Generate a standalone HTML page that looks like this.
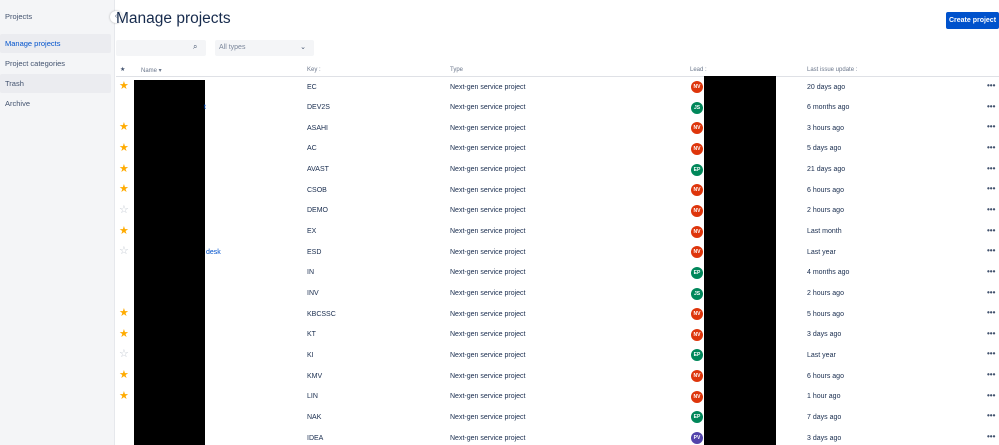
<!DOCTYPE html>
<html><head><style>
body{margin:0;width:999px;height:445px;overflow:hidden;background:#fff;font-family:"Liberation Sans",sans-serif;color:#172b4d;position:relative}
.a{position:absolute;white-space:nowrap}
.side{position:absolute;left:0;top:0;width:114px;height:445px;background:#f4f5f7;border-right:1px solid #e6e8ec}
.si{position:absolute;left:0;width:111px;height:19px;font-size:7.5px;line-height:19px;padding-left:5px;box-sizing:border-box;color:#42526e;border-radius:2px}
.t{font-size:7px;color:#172b4d}
.h{font-size:6px;color:#6b778c}
.av{position:absolute;left:691px;width:12px;height:12px;border-radius:50%;color:#fff;font-size:5px;font-weight:bold;text-align:center;line-height:12px}
.dots{position:absolute;left:987px;font-size:8px;font-weight:bold;color:#42526e;letter-spacing:0px}
</style></head><body>
<div class="side">
<div class="a" style="left:5px;top:12px;font-size:7.5px;color:#42526e">Projects</div>
<div class="si" style="top:34px;background:#ebecf0;color:#0052cc">Manage projects</div>
<div class="si" style="top:54px">Project categories</div>
<div class="si" style="top:74px;background:#ebecf0">Trash</div>
<div class="si" style="top:94px">Archive</div>
</div>
<div class="a" style="left:110px;top:11px;width:12px;height:12px;border-radius:50%;background:#fff;box-shadow:0 0 2px rgba(0,0,0,.3);font-size:7px;text-align:center;line-height:12px;color:#42526e">‹</div>
<div class="a" style="left:116px;top:10px;font-size:15.5px;color:#172b4d">Manage projects</div>
<div class="a" style="left:946px;top:12px;width:53px;height:17px;background:#0052cc;border-radius:2px;color:#fff;font-size:7px;font-weight:bold;line-height:17px;text-align:center">Create project</div>
<div class="a" style="left:116px;top:40px;width:90px;height:16px;background:#f4f5f7;border-radius:2px"></div>
<div class="a" style="left:193px;top:42px;font-size:8px;color:#42526e">⌕</div>
<div class="a" style="left:215px;top:40px;width:99px;height:16px;background:#f4f5f7;border-radius:2px;font-size:7px;line-height:16px;color:#7a869a;padding-left:4px;box-sizing:border-box">All types<span style="position:absolute;right:8px;color:#42526e">⌄</span></div>
<div class="a h" style="left:120px;top:66px;color:#42526e">★</div>
<div class="a h" style="left:141px;top:67px">Name ▾</div>
<div class="a h" style="left:307px;top:67px">Key :</div>
<div class="a h" style="left:450px;top:67px">Type</div>
<div class="a h" style="left:690px;top:67px">Lead :</div>
<div class="a h" style="left:807px;top:67px">Last issue update :</div>
<div class="a" style="left:116px;top:76px;width:883px;height:1px;background:#dfe1e6"></div>
<div class="a" style="left:134px;top:80px;width:71px;height:365px;background:#000"></div>
<div class="a" style="left:704px;top:76px;width:72px;height:369px;background:#000"></div>
<div id="rows"></div>
<script>
var d=[["EC","NV","20 days ago",1],["DEV2S","JS","6 months ago",0,"t"],["ASAHI","NV","3 hours ago",1],["AC","NV","5 days ago",1],["AVAST","EP","21 days ago",1],["CSOB","NV","6 hours ago",1],["DEMO","NV","2 hours ago",2],["EX","NV","Last month",1],["ESD","NV","Last year",2,"desk"],["IN","EP","4 months ago",0],["INV","JS","2 hours ago",0],["KBCSSC","NV","5 hours ago",1],["KT","NV","3 days ago",1],["KI","EP","Last year",2],["KMV","NV","6 hours ago",1],["LIN","NV","1 hour ago",1],["NAK","EP","7 days ago",0],["IDEA","PV","3 days ago",0]];
var col={NV:"#de350b",JS:"#00875a",EP:"#00875a",PV:"#5243aa"};
var h="";d.forEach(function(r,i){var y=81+i*20.65;
if(r[3]==1)h+='<div class="a" style="left:119px;top:'+(y-2)+'px;font-size:11px;color:#ffab00">★</div>';
if(r[3]==2)h+='<div class="a" style="left:119px;top:'+(y-2)+'px;font-size:11px;color:#c1c7d0">☆</div>';
if(r[4])h+='<div class="a t" style="left:'+(r[4]=="t"?204:206)+'px;top:'+(y+2.5)+'px;color:#0052cc">'+r[4]+'</div>';
h+='<div class="a t" style="left:307px;top:'+(y+2.5)+'px">'+r[0]+'</div>';
h+='<div class="a t" style="left:450px;top:'+(y+2.5)+'px">Next-gen service project</div>';
h+='<div class="av" style="top:'+y+'px;background:'+col[r[1]]+'">'+r[1]+'</div>';
h+='<div class="a t" style="left:807px;top:'+(y+2.5)+'px">'+r[2]+'</div>';
h+='<div class="dots" style="top:'+(y)+'px">•••</div>';});
document.getElementById("rows").innerHTML=h;
</script>
</body></html>
